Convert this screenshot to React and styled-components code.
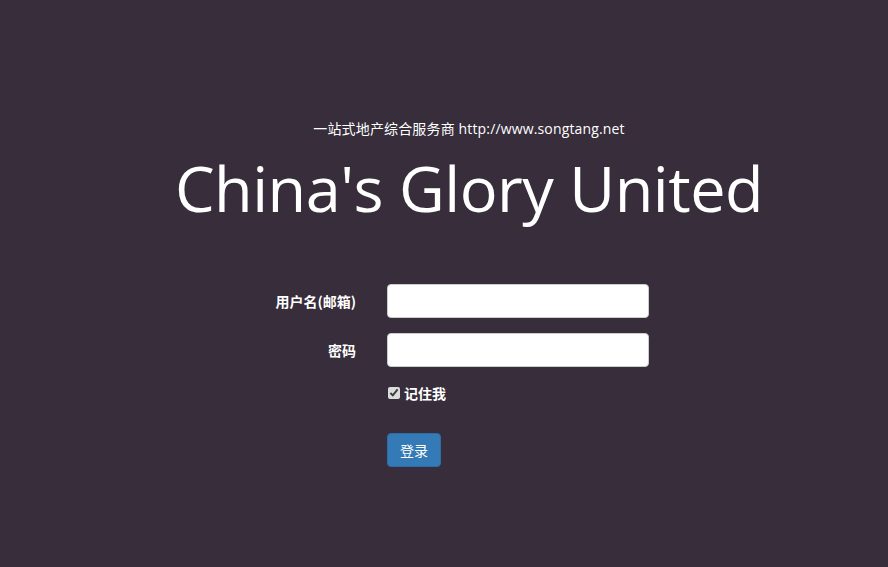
import React from "react";
import styled, { createGlobalStyle } from "styled-components";

const Global = createGlobalStyle`
  html, body { margin: 0; padding: 0; background: #372d3b; }
  body { font-family: "Open Sans", "Noto Sans CJK SC", sans-serif; color: #fff; }
  * { box-sizing: border-box; }
`;

const Page = styled.div`
  width: 888px;
  height: 567px;
  background: #372d3b;
  display: flex;
  flex-direction: column;
  padding-top: 119px;
`;

const Header = styled.div`
  display: flex;
  flex-direction: column;
  align-items: center;
  padding-left: 50px;
`;

const Subtitle = styled.div`
  font-size: 14px;
  line-height: 20px;
  color: #fff;
  letter-spacing: 0.15px;
  font-family: "Open Sans", "Noto Sans CJK SC", sans-serif;
`;

const Title = styled.h1`
  margin: 9px 0 0;
  font-family: "Open Sans", sans-serif;
  font-weight: 400;
  font-size: 63px;
  line-height: 80px;
  color: #fff;
  letter-spacing: -0.5px;
`;

const Form = styled.form`
  margin-top: 56px;
  display: flex;
  flex-direction: column;
`;

const Row = styled.div`
  display: grid;
  grid-template-columns: 356px 262px;
  column-gap: 31px;
  align-items: center;
  margin-bottom: ${(p) => p.$mb ?? 15}px;
`;

const Label = styled.label`
  text-align: right;
  font-family: "Noto Sans CJK SC", sans-serif;
  font-weight: 700;
  font-size: 14px;
  color: #fff;
`;

const Input = styled.input`
  height: 34px;
  width: 262px;
  border: 1px solid #ccc;
  border-radius: 4px;
  background: #fff;
  padding: 6px 12px;
  font-size: 14px;
  outline: none;
`;

const Check = styled.label`
  display: flex;
  align-items: center;
  gap: 4px;
  font-family: "Noto Sans CJK SC", sans-serif;
  font-weight: 700;
  font-size: 14px;
  color: #fff;
  height: 20px;
  input {
    margin: 0 0 0 1px;
    width: 12px;
    height: 12px;
    accent-color: #dcdcdc;
  }
`;

const Button = styled.button`
  width: 54px;
  height: 34px;
  background: #337ab7;
  border: 1px solid #2e6da4;
  border-radius: 4px;
  color: #fff;
  font-family: "Noto Sans CJK SC", sans-serif;
  font-size: 14px;
  padding: 0;
`;

export default function App() {
  return (
    <Page>
      <Global />
      <Header>
        <Subtitle>一站式地产综合服务商 http://www.songtang.net</Subtitle>
        <Title>China's Glory United</Title>
      </Header>
      <Form onSubmit={(e) => e.preventDefault()}>
        <Row>
          <Label>用户名(邮箱)</Label>
          <Input type="text" />
        </Row>
        <Row $mb={16}>
          <Label>密码</Label>
          <Input type="password" />
        </Row>
        <Row $mb={30}>
          <span />
          <Check>
            <input type="checkbox" defaultChecked />
            记住我
          </Check>
        </Row>
        <Row>
          <span />
          <div>
            <Button type="submit">登录</Button>
          </div>
        </Row>
      </Form>
    </Page>
  );
}
